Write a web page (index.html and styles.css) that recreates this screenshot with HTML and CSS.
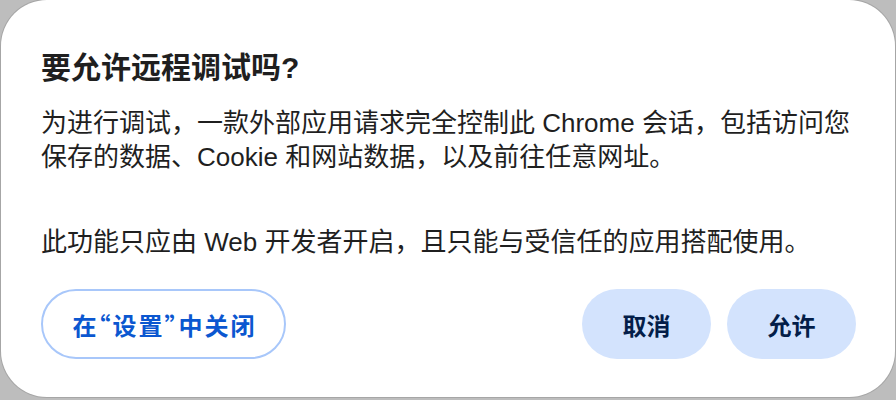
FILE: index.html
```html
<!DOCTYPE html>
<html lang="zh-CN">
<head>
  <meta charset="UTF-8" />
  <meta name="viewport" content="width=device-width, initial-scale=1.0" />
  <title>远程调试</title>
  <link rel="stylesheet" href="styles.css">
</head>
<body>

  <div class="dialog">
    <h2 class="dialog-title">要允许远程调试吗?</h2>
    <p class="dialog-text">为进行调试，一款外部应用请求完全控制此 Chrome 会话，包括访问您保存的数据、Cookie 和网站数据，以及前往任意网址。</p>
    <p class="dialog-text second">此功能只应由 Web 开发者开启，且只能与受信任的应用搭配使用。</p>

    <div class="dialog-actions">
      <button type="button" class="btn btn-outline">在“设置”中关闭</button>
      <div class="actions-right">
        <button type="button" class="btn btn-tonal">取消</button>
        <button type="button" class="btn btn-tonal">允许</button>
      </div>
    </div>
  </div>

</body>
</html>
```

FILE: styles.css
```css
:root {
  --backdrop: #bdbdbd;
  --card-bg: #fff;
  --text: #1f1f1f;
  --primary: #0b57d0;
  --outline: #a8c7fa;
  --tonal-bg: #d3e3fd;
  --tonal-text: #041e49;
}

* {
  margin: 0;
  padding: 0;
  box-sizing: border-box;
}

body {
  width: 896px;
  height: 400px;
  overflow: hidden;
  background: var(--backdrop);
  font-family: "Liberation Sans", "Noto Sans CJK SC", sans-serif;
  color: var(--text);
}

.dialog {
  width: 894px;
  height: 397px;
  margin-left: 1px;
  background: var(--card-bg);
  border-radius: 46px;
  box-shadow: 0 0 0 1px rgba(0, 0, 0, 0.12);
  padding: 48px 39px 0 40px;
}

.dialog-title {
  font-size: 30px;
  line-height: 40px;
  font-weight: bold;
  margin-bottom: 18px;
}

.dialog-text {
  font-size: 26px;
  line-height: 34px;
}

.dialog-text.second {
  margin-top: 51px;
}

.dialog-actions {
  display: flex;
  justify-content: space-between;
  align-items: center;
  margin-top: 30px;
}

.actions-right {
  display: flex;
  gap: 16px;
}

.btn {
  height: 70px;
  border-radius: 35px;
  font-family: "Noto Sans CJK SC", sans-serif;
  font-size: 24px;
  font-weight: bold;
  cursor: pointer;
  border: none;
}

/* half-width quotes, a bit of tracking like the original */
.btn-outline {
  background: transparent;
  color: var(--primary);
  border: 2px solid var(--outline);
  width: 245px;
  font-feature-settings: "halt";
  letter-spacing: 2px;
  text-indent: 2px;
}

.btn-tonal {
  background: var(--tonal-bg);
  color: var(--tonal-text);
  width: 129px;
}
```
